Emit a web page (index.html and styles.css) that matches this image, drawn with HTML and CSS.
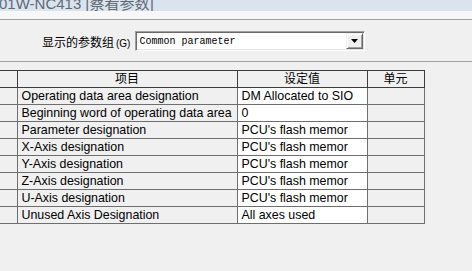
FILE: index.html
```html
<!DOCTYPE html>
<html>
<head>
  <title>察看参数</title>
  <link rel="stylesheet" href="styles.css">
</head>
<body>
  <div class="titlebar">
    <span class="title">01W-NC413 <span class="title-cjk">[察看参数]</span></span>
  </div>
  <div class="strip"></div>

  <div class="toolbar">
    <label class="group-label">显示的参数组<span class="hotkey">(G)</span></label>
    <div class="combo">
      <span class="combo-text">Common parameter</span>
      <span class="combo-btn">
        <svg width="7" height="4" viewBox="0 0 7 4"><path d="M0 0h7L3.5 4z" fill="#000"/></svg>
      </span>
    </div>
  </div>

  <table class="grid">
    <thead>
      <tr>
        <th class="rowhead"></th>
        <th class="col-item">项目</th>
        <th class="col-value">设定值</th>
        <th class="col-unit">单元</th>
      </tr>
    </thead>
    <tbody id="rows"></tbody>
  </table>

  <script>
    // parameter rows of the common group
    const params = [
      ['Operating data area designation', 'DM Allocated to SIO'],
      ['Beginning word of operating data area', '0'],
      ['Parameter designation', "PCU's flash memor"],
      ['X-Axis designation', "PCU's flash memor"],
      ['Y-Axis designation', "PCU's flash memor"],
      ['Z-Axis designation', "PCU's flash memor"],
      ['U-Axis designation', "PCU's flash memor"],
      ['Unused Axis Designation', 'All axes used']
    ];

    const rows = document.getElementById('rows');
    params.forEach(p => {
      const tr = document.createElement('tr');
      tr.innerHTML = '<td class="rowhead"></td>' +
        '<td class="col-item">' + p[0] + '</td>' +
        '<td class="col-value">' + p[1] + '</td>' +
        '<td class="col-unit"></td>';
      rows.appendChild(tr);
    });
  </script>
</body>
</html>
```

FILE: styles.css
```css
body {
  margin: 0;
  background-color: #f0f0f0;
  font-family: "Liberation Sans", "Noto Sans CJK SC", sans-serif;
  font-size: 12px;
  color: #000;
  overflow: hidden;
}
.titlebar {
  height: 11px;
  overflow: hidden;
  background-color: #dbe4ee;
}
.title {
  display: block;
  margin-top: -4px;
  margin-left: -1px;
  font-size: 15px;
  line-height: 15px;
  color: #606a74;
  white-space: nowrap;
}
.strip {
  height: 8px;
  background-color: #f7f7f7;
  border-bottom: 1px solid #a0a0a0;
}
.toolbar {
  display: flex;
  align-items: center;
  height: 42px;
  padding-left: 42px;
  border-bottom: 1px solid #a0a0a0;
  box-sizing: border-box;
  padding-top: 1px;
}
.group-label {
  font-size: 12px;
  margin-right: 5px;
  white-space: nowrap;
}
.hotkey {
  font-size: 10px;
  margin-left: 2px;
}
.combo {
  display: flex;
  align-items: center;
  width: 230px;
  height: 20px;
  box-sizing: border-box;
  background: #fff;
  border-top: 1px solid #a0a0a0;
  border-left: 1px solid #a0a0a0;
  border-right: 1px solid #fff;
  border-bottom: 1px solid #fff;
  box-shadow: inset 1px 1px 0 #696969, inset -1px -1px 0 #e3e3e3;
  padding: 1px;
}
.combo-text {
  flex: 1;
  font-family: "Liberation Mono", monospace;
  font-size: 10px;
  padding-left: 2px;
  padding-top: 1px;
}
.combo-btn {
  display: flex;
  align-items: center;
  justify-content: center;
  width: 17px;
  height: 16px;
  box-sizing: border-box;
  background: #f0f0f0;
  border-top: 1px solid #f0f0f0;
  border-left: 1px solid #f0f0f0;
  border-right: 1px solid #696969;
  border-bottom: 1px solid #696969;
  box-shadow: inset 1px 1px 0 #fff, inset -1px -1px 0 #a0a0a0;
}
.grid {
  border-collapse: collapse;
  margin-top: 8px;
  table-layout: fixed;
  font-size: 12.4px;
}
.grid th,
.grid td {
  height: 17px;
  padding: 0 4px;
  line-height: 16px;
  white-space: nowrap;
  overflow: hidden;
  box-sizing: border-box;
}
.grid th {
  font-weight: normal;
  font-size: 12px;
  text-align: center;
  border: 1px solid #3c3c3c;
  border-left-color: #a0a0a0;
  background-color: #f0f0f0;
}
.grid td {
  border: 1px solid #6e6e6e;
}
.grid .rowhead {
  width: 17px;
  border-left: none;
}
.grid .col-item {
  width: 220px;
}
.grid .col-value {
  width: 130px;
}
.grid td.col-value {
  background-color: #fff;
}
.grid .col-unit {
  width: 57px;
}
```
